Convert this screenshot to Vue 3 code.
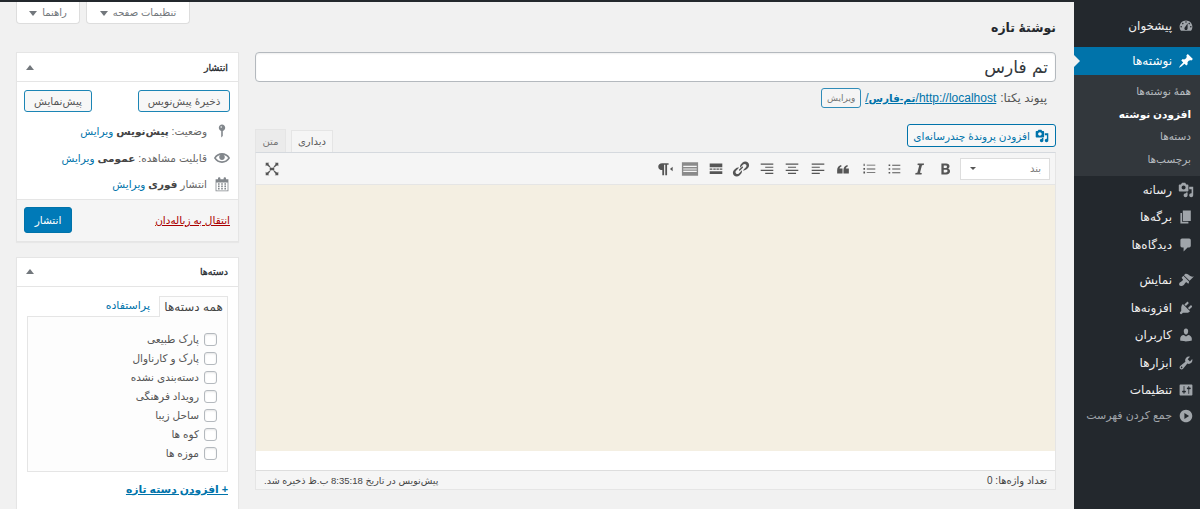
<script setup>
const menuTop = [
  { label: 'پیشخوان', icon: 'M3.76 16h12.48c1.1-1.37 1.76-3.11 1.76-5 0-4.42-3.58-8-8-8s-8 3.58-8 8c0 1.89.66 3.63 1.76 5zM10 4c.55 0 1 .45 1 1s-.45 1-1 1-1-.45-1-1 .45-1 1-1zM6 6c.55 0 1 .45 1 1s-.45 1-1 1-1-.45-1-1 .45-1 1-1zm8 0c.55 0 1 .45 1 1s-.45 1-1 1-1-.45-1-1 .45-1 1-1zm-5.37 5.55L12 7v6c0 1.1-.9 2-2 2s-2-.9-2-2c0-.57.24-1.08.63-1.45zM4 10c.55 0 1 .45 1 1s-.45 1-1 1-1-.45-1-1 .45-1 1-1zm12 0c.55 0 1 .45 1 1s-.45 1-1 1-1-.45-1-1 .45-1 1-1z' }
]
const postIcon = 'M10.44 3.02l1.82-1.82 6.36 6.35-1.83 1.82c-1.05-.68-2.48-.57-3.41.36l-.75.75c-.92.93-1.04 2.35-.35 3.41l-1.83 1.82-2.41-2.41-2.8 2.79c-.42.42-3.38 2.71-3.8 2.29s1.86-3.39 2.28-3.81l2.79-2.79L4.1 9.36l1.83-1.82c1.05.69 2.48.57 3.4-.36l.75-.75c.93-.92 1.05-2.35.36-3.41z'
const mediaIcon = 'M13 11V4c0-.55-.45-1-1-1h-1.67L9 1H5L3.67 3H2c-.55 0-1 .45-1 1v7c0 .55.45 1 1 1h10c.55 0 1-.45 1-1zM7 4.5c1.38 0 2.5 1.12 2.5 2.5S8.38 9.5 7 9.5 4.5 8.38 4.5 7 5.62 4.5 7 4.5zM14 6h5v10.5c0 1.38-1.12 2.5-2.5 2.5S14 17.88 14 16.5s1.12-2.5 2.5-2.5c.17 0 .34.02.5.05V9h-3V6zm-4 8.05V13h2v3.5c0 1.38-1.12 2.5-2.5 2.5S7 17.88 7 16.5 8.12 14 9.5 14c.17 0 .34.02.5.05z'
const group2 = [
  { label: 'رسانه', icon: mediaIcon },
  { label: 'برگه‌ها', icon: 'M6 15V2h10v13H6zm-1 1h8v2H3V5h2v11z' },
  { label: 'دیدگاه‌ها', icon: 'M5 2h9c1.1 0 2 .9 2 2v7c0 1.1-.9 2-2 2h-2l-5 5v-5H5c-1.1 0-2-.9-2-2V4c0-1.1.9-2 2-2z' }
]
const group3 = [
  { label: 'نمایش', icon: 'M14.48 11.06L7.41 3.99l1.5-1.5c.5-.56 2.3-.47 3.51.32 1.21.8 1.43 1.28 2.91 2.1 1.18.64 2.45 1.26 4.45.85zm-.71.71L6.7 4.7 4.93 6.47c-.39.39-.39 1.02 0 1.41l1.06 1.06c.39.39.39 1.03 0 1.42-.6.6-1.43 1.11-2.21 1.69-.35.26-.7.53-1.01.84C1.43 13.23.91 15.95 1.98 17s3.79.54 5.1-.77c.32-.32.59-.67.85-1.02.58-.79 1.09-1.61 1.69-2.21.39-.39 1.02-.39 1.41 0l1.06 1.06c.39.39 1.02.39 1.41 0z' },
  { label: 'افزونه‌ها', icon: 'M13.11 4.36L9.87 7.6 8 5.73l3.24-3.24c.35-.34 1.05-.2 1.56.32.52.51.66 1.21.31 1.55zm-8 1.77l.91-1.12 9.01 9.01-1.19.84c-.71.71-2.63 1.16-3.82 1.16H6.14L4.9 17.26c-.59.59-1.54.59-2.12 0-.59-.58-.59-1.53 0-2.12l1.24-1.24v-3.88c0-1.13.4-3.19 1.09-3.89zm7.26 3.97l3.24-3.24c.34-.35 1.04-.21 1.55.31.52.51.66 1.21.31 1.55l-3.24 3.25z' },
  { label: 'کاربران', icon: 'M10 9.25c-2.27 0-2.73-3.44-2.73-3.44C7 4.02 7.82 2 9.97 2c2.16 0 2.98 2.02 2.71 3.81 0 0-.41 3.44-2.68 3.44zm0 2.57L12.72 10c2.39 0 4.52 2.33 4.52 4.53v2.49s-3.65 1.13-7.24 1.13c-3.65 0-7.24-1.13-7.24-1.13v-2.49c0-2.25 1.94-4.48 4.47-4.48z' },
  { label: 'ابزارها', icon: 'M16.68 9.77c-1.34 1.34-3.3 1.67-4.95.99l-5.41 6.52c-.99.99-2.59.99-3.58 0s-.99-2.59 0-3.57l6.52-5.42c-.68-1.65-.35-3.61.99-4.95 1.28-1.28 3.12-1.62 4.72-1.06l-2.89 2.89 2.82 2.82 2.86-2.87c.53 1.58.18 3.39-1.08 4.65zM3.81 16.21c.4.39 1.04.39 1.43 0 .4-.4.4-1.04 0-1.43-.39-.4-1.03-.4-1.43 0-.39.39-.39 1.03 0 1.43z' },
  { label: 'تنظیمات', icon: 'M18 16V4c0-.55-.45-1-1-1H3c-.55 0-1 .45-1 1v12c0 .55.45 1 1 1h14c.55 0 1-.45 1-1zM8 11h1c.55 0 1 .45 1 1s-.45 1-1 1H8v1.5c0 .28-.22.5-.5.5s-.5-.22-.5-.5V13H6c-.55 0-1-.45-1-1s.45-1 1-1h1V5.5c0-.28.22-.5.5-.5s.5.22.5.5V11zm5-2h-1c-.55 0-1-.45-1-1s.45-1 1-1h1V5.5c0-.28.22-.5.5-.5s.5.22.5.5V7h1c.55 0 1 .45 1 1s-.45 1-1 1h-1v5.5c0 .28-.22.5-.5.5s-.5-.22-.5-.5V9z' }
]
const submenu = ['همهٔ نوشته‌ها', 'افزودن نوشته', 'دسته‌ها', 'برچسب‌ها']
const collapseIcon = 'M10 2.16c4.33 0 7.84 3.51 7.84 7.84s-3.51 7.84-7.84 7.84S2.16 14.33 2.16 10 5.71 2.16 10 2.16zm2 11.72V6.12L6.18 9.97z'
const categories = ['پارک طبیعی', 'پارک و کارناوال', 'دسته‌بندی نشده', 'رویداد فرهنگی', 'ساحل زیبا', 'کوه ها', 'موزه ها']
const toolbar = [
  { name: 'bold', d: 'M6 4h5.2c2.4 0 3.8 1.1 3.8 3 0 1.2-.7 2.1-1.8 2.5 1.5.3 2.4 1.4 2.4 2.9 0 2.2-1.6 3.6-4.2 3.6H6zm2.6 2.1v2.7h2c1 0 1.6-.5 1.6-1.4s-.6-1.3-1.6-1.3zm0 4.7v3.1h2.3c1.2 0 1.9-.6 1.9-1.6s-.7-1.5-1.9-1.5z' },
  { name: 'italic', d: 'M7.5 4h7l-.3 1.5-2 .4L10 14.1l2 .4-.3 1.5h-7l.3-1.5 2-.4 2.2-8.2-2-.4z' },
  { name: 'ul', d: 'M4 5h1.8v1.8H4zm4 .4h9v1H8zM4 9.100h1.800v1.800H4zm4 .4h9v1H8zM4 13.200h1.800V15H4zm4 .4h9v1H8z' },
  { name: 'ol', d: 'M4 4.300h1.200v2.400H4zm3.500.9h9.500v1H7.500zM3.800 9h1.800v1.800H3.800zm3.700.5h9.500v1H7.500zm-3.700 3.200h1.800v2.400H3.800zm3.700.6h9.500v1H7.500z' },
  { name: 'quote', tf: 'rotate(180 10 10)', d: 'M9.500 5v3.800c0 3-1.800 5-4.300 5.700l-.7-1.400c1.300-.5 2.200-1.400 2.400-2.600H3.500V5zm7 0v3.800c0 3-1.800 5-4.300 5.700l-.7-1.400c1.300-.5 2.200-1.400 2.400-2.600h-3.400V5z' },
  { name: 'left', d: 'M3 4h14v1.300H3zm0 3.400h9v1.300H3zm0 3.400h14v1.300H3zm0 3.400h9v1.300H3z' },
  { name: 'center', d: 'M3 4h14v1.300H3zm2.500 3.400h9v1.300h-9zM3 10.800h14v1.300H3zm2.500 3.400h9v1.300h-9z' },
  { name: 'right', d: 'M3 4h14v1.300H3zm5 3.400h9v1.300H8zm-5 3.400h14v1.300H3zm5 3.400h9v1.300H8z' },
  { name: 'link', d: 'M17.740 2.760c1.680 1.690 1.680 4.410 0 6.100l-1.530 1.520c-1.120 1.130-2.700 1.510-4.130 1.170l2.270-2.270 1.140-1.140c.84-.84.840-2.210 0-3.050s-2.210-.84-3.050 0l-1.140 1.140-2.270 2.270c-.340-1.430.040-3.010 1.170-4.130l1.520-1.530c1.690-1.680 4.410-1.680 6.020-.08zM7.920 11.580c.31.310.78.310 1.080 0l3.050-3.050c.31-.3.310-.77 0-1.080s-.77-.31-1.080 0L7.920 10.500c-.31.310-.31.780 0 1.080zM2.260 17.240c-1.680-1.690-1.680-4.410 0-6.100l1.530-1.520c1.120-1.130 2.700-1.510 4.130-1.170L5.650 10.720 4.510 11.860c-.84.840-.84 2.210 0 3.050s2.210.84 3.050 0l1.140-1.140 2.270-2.270c.34 1.430-.04 3.010-1.170 4.130l-1.520 1.530c-1.690 1.680-4.410 1.680-6.020.08z' },
  { name: 'more', d: 'M3 4h14v4H3zm0 5.500h3v1.400H3zm4 0h2.700v1.400H7zm3.500 0h2.700v1.400h-2.700zm3.500 0h3v1.400h-3zM3 12.500h14v3H3z' },
  { name: 'kitchen', fade: true, d: 'M1 2.500h18v15H1zm1.500 4h15v1.300h-15zm0 3h15v1h-15zm0 2.500h15v1.200h-15z' },
  { name: 'para', d: 'M3 3.500h11v1.900h-1.700V17h-2V5.400H9V17H7v-5.800C4.500 11.200 2.500 9.700 2.500 7.400 2.500 5.100 4.300 3.500 6.800 3.500zM18.500 7.500v5L15.500 10z' }
]
</script>

<template>
  <div class="page">
    <div class="adminbar"></div>
    <div class="layout">
      <nav class="menu">
        <ul class="menu-list first">
          <li v-for="item in menuTop" :key="item.label" class="menu-item">
            <svg class="menu-icon" viewBox="0 0 20 20"><path :d="item.icon" /></svg>
            <span>{{ item.label }}</span>
          </li>
        </ul>
        <div class="active-item">
          <svg class="menu-icon" viewBox="0 0 20 20"><path :d="postIcon" /></svg>
          <span>نوشته‌ها</span>
          <i class="active-arrow"></i>
        </div>
        <ul class="submenu">
          <li v-for="(s, i) in submenu" :key="s" :class="{ current: i === 1 }">{{ s }}</li>
        </ul>
        <ul class="menu-list second">
          <li v-for="item in group2" :key="item.label" class="menu-item">
            <svg class="menu-icon" viewBox="0 0 20 20"><path :d="item.icon" /></svg>
            <span>{{ item.label }}</span>
          </li>
        </ul>
        <ul class="menu-list third">
          <li v-for="item in group3" :key="item.label" class="menu-item">
            <svg class="menu-icon" viewBox="0 0 20 20"><path :d="item.icon" /></svg>
            <span>{{ item.label }}</span>
          </li>
        </ul>
        <div class="collapse">
          <svg class="menu-icon" viewBox="0 0 20 20"><path :d="collapseIcon" transform="matrix(-1 0 0 1 20 0)" /></svg>
          <span>جمع کردن فهرست</span>
        </div>
      </nav>

      <main class="content">
        <section class="primary">
          <h1 class="title">نوشتهٔ تازه</h1>
          <input class="title-input" type="text" value="تم فارس" />
          <div class="permalink">
            <span class="perma-label">پیوند یکتا:</span>
            <a class="perma-link">http://localhost/<b>تم-فارس</b>/</a>
            <button class="mini-btn">ویرایش</button>
          </div>
          <div class="editor-tools">
            <button class="media-btn">
              <svg viewBox="0 0 20 20"><path :d="mediaIcon" /></svg>
              <span>افزودن پروندهٔ چندرسانه‌ای</span>
            </button>
            <div class="tabs">
              <span class="tab tab-on">دیداری</span>
              <span class="tab tab-off">متن</span>
            </div>
          </div>
          <div class="editor">
            <div class="toolbar">
              <div class="format-select"><span>بند</span><i></i></div>
              <svg v-for="t in toolbar" :key="t.name" class="tool" :class="{ fade: t.fade }" viewBox="0 0 20 20"><path fill-rule="evenodd" :d="t.d" :transform="t.tf" /></svg>
              <svg class="tool full" viewBox="0 0 20 20"><path d="M3 3h4L5.800 4.200 8.500 8l-.5.500L4.200 5.800 3 7zm14 0v4l-1.200-1.200L12 8.500l-.5-.5 2.700-3.800L13 3zM3 17v-4l1.200 1.200L8 11.500l.5.500-2.700 3.800L7 17zm14 0h-4l1.200-1.200L11.500 12l.5-.5 3.800 2.700L17 13zM7.500 8.500h5v3h-5z" /></svg>
            </div>
            <div class="canvas"></div>
            <div class="canvas-foot"></div>
            <div class="status">
              <span class="count">تعداد واژه‌ها: 0</span>
              <span>پیش‌نویس در تاریخ 8:35:18 ب.ظ ذخیره شد.</span>
            </div>
          </div>
        </section>

        <aside class="side">
          <div class="screen-tabs">
            <button class="screen-btn wide">تنظیمات صفحه<i></i></button>
            <button class="screen-btn">راهنما<i></i></button>
          </div>

          <div class="box">
            <div class="box-head"><b>انتشار</b><i></i></div>
            <div class="pub-actions">
              <button class="blue-outline draft">ذخیرهٔ پیش‌نویس</button>
              <button class="blue-outline preview">پیش‌نمایش</button>
            </div>
            <div class="pub-row">
              <svg viewBox="0 0 20 20"><path d="M14 6c0 1.860-1.280 3.410-3 3.860V16c0 1-2 2-2 2V9.860c-1.720-.45-3-2-3-3.860 0-2.210 1.790-4 4-4s4 1.790 4 4zM8 5c0 .55.45 1 1 1s1-.45 1-1-.45-1-1-1-1 .45-1 1z" /></svg>
              <span>وضعیت: <b>پیش‌نویس</b> <a>ویرایش</a></span>
            </div>
            <div class="pub-row">
              <svg viewBox="0 0 20 20"><path d="M19.700 9.400C17.700 6 14 3.900 10 3.900S2.300 6 .3 9.400L0 10l.3.6c2 3.400 5.700 5.500 9.700 5.500s7.700-2.100 9.700-5.500l.3-.6-.3-.6zM10 14.100c-3.100 0-6-1.600-7.700-4.100C3.600 8 5.700 6.600 8 6.100c-.9.6-1.500 1.700-1.500 2.900 0 1.900 1.600 3.500 3.500 3.500s3.500-1.600 3.500-3.500c0-1.200-.6-2.300-1.500-2.900 2.300.5 4.400 1.900 5.700 3.900-1.700 2.500-4.600 4.100-7.700 4.100z" /></svg>
              <span>قابلیت مشاهده: <b>عمومی</b> <a>ویرایش</a></span>
            </div>
            <div class="pub-row">
              <svg viewBox="0 0 20 20"><path d="M15 4h3v15H2V4h3V3c0-.41.15-.76.44-1.060.29-.29.65-.44 1.060-.44s.77.15 1.060.44c.29.3.44.65.44 1.060v1h4V3c0-.41.15-.76.44-1.060.29-.29.65-.44 1.060-.44s.77.15 1.060.44c.29.3.44.65.44 1.060v1zM17 18V8H3v10h14zM7 9v2H5V9h2zm2 0h2v2H9V9zm4 2V9h2v2h-2zm-6 1v2H5v-2h2zm2 0h2v2H9v-2zm4 2v-2h2v2h-2zm-6 1v2H5v-2h2zm4 2H9v-2h2v2zm4 0h-2v-2h2v2z" /></svg>
              <span>انتشار <b>فوری</b> <a>ویرایش</a></span>
            </div>
            <div class="pub-foot">
              <a class="trash">انتقال به زباله‌دان</a>
              <button class="publish">انتشار</button>
            </div>
          </div>

          <div class="box cats">
            <div class="box-head"><b>دسته‌ها</b><i></i></div>
            <div class="cats-body">
              <div class="cat-tabs">
                <span class="cat-tab on">همه دسته‌ها</span>
                <a class="cat-tab">پراستفاده</a>
              </div>
              <div class="cat-panel">
                <label v-for="c in categories" :key="c" class="cat-row">
                  <input type="checkbox" />
                  <span>{{ c }}</span>
                </label>
              </div>
              <a class="add-cat">+ افزودن دسته تازه</a>
            </div>
          </div>
        </aside>
      </main>
    </div>
  </div>
</template>

<style>
html, body { margin: 0; padding: 0; background: #f1f1f1; overflow: hidden; }
</style>

<style scoped>
* { box-sizing: border-box; }
ul { list-style: none; margin: 0; padding: 0; }
button { font-family: inherit; cursor: pointer; margin: 0; padding: 0; }
a { color: #0073aa; }
.page {
  height: 509px;
  overflow: hidden;
  direction: rtl;
  background: #f1f1f1;
  color: #444;
  font-family: "Liberation Sans", "DejaVu Sans", sans-serif;
  font-size: 11px;
}
.adminbar { height: 2px; background: #23282d; }
.layout { display: flex; height: 507px; }

.menu { width: 126px; flex: none; background: #23282d; color: #eee; font-size: 12px; padding-top: 10px; }
.menu-item, .active-item, .collapse { display: flex; align-items: center; height: 27.500px; padding-right: 6px; gap: 6px; }
.menu-icon { width: 16px; height: 16px; flex: none; fill: #a0a5aa; }
.first { margin-bottom: 8px; height: 27px; }
.active-item { height: 28px; background: #0073aa; color: #fff; position: relative; }
.active-item .menu-icon { fill: #fff; }
.active-arrow { position: absolute; left: 0; top: 8px; border: 6px solid transparent; border-left-color: #f1f1f1; border-right-width: 0; }
.submenu { background: #32373c; height: 101px; padding-top: 5px; color: #b4b9be; }
.submenu li { height: 22.700px; line-height: 22px; padding-right: 9px; font-size: 10.500px; }
.submenu .current { color: #fff; font-weight: 700; }
.second { margin-bottom: 8px; }
.collapse { color: #a0a5aa; height: 23px; font-size: 11px; }

.content { flex: 1; display: grid; grid-template-columns: 801px 223px; gap: 16px; padding: 0 18px 0 16px; align-items: start; }
.primary { min-width: 0; }
.title { margin: 14px 0 12px; font-size: 12.500px; line-height: 24px; font-weight: 700; color: #23282d; }
.title-input {
  display: block; width: 100%; height: 30px; padding: 0 7px;
  border: 1px solid #b4b9be; border-radius: 4px; background: #fff;
  font: 17px "DejaVu Sans", sans-serif; color: #32373c; outline: none;
  direction: rtl; box-shadow: inset 0 1px 2px rgba(0,0,0,.07);
}
.permalink { display: flex; align-items: center; height: 20px; margin-top: 6px; padding-right: 9px; gap: 4px; font-size: 12px; color: #555; }
.perma-link { text-decoration: underline; font-size: 12px; }
.perma-link b { font-size: 10.500px; }
.mini-btn { width: 40px; height: 20px; border: 1px solid #0073aa; border-radius: 3px; background: #f7f7f7; color: #555; font-size: 9px; opacity: .8; }

.editor-tools { display: flex; justify-content: space-between; align-items: flex-end; height: 28px; margin-top: 16px; }
.media-btn {
  align-self: flex-start; display: flex; align-items: center; gap: 5px; width: 149px; height: 23px; padding: 0 6px 0 0;
  border: 1px solid #0073aa; border-radius: 3px; background: #f7f7f7; color: #0073aa; font-size: 10.500px;
}
.media-btn svg { width: 14px; height: 14px; fill: #0073aa; flex: none; }
.tabs { display: flex; gap: 5px; }
.tab { display: flex; align-items: center; justify-content: center; border: 1px solid #e5e5e5; border-bottom: 0; font-size: 10px; color: #555; height: 22px; }
.tab-on { width: 42px; background: #f5f5f5; position: relative; top: 1px; }
.tab-off { width: 31px; height: 23px; background: #ebebeb; color: #777; }

.editor { border: 1px solid #e5e5e5; background: #fff; border-top-color: #d5d9de; }
.toolbar { position: relative; display: flex; align-items: center; height: 32px; padding-right: 5px; background: #f5f5f5; border-bottom: 1px solid #e5e5e5; }
.format-select { display: flex; justify-content: space-between; align-items: center; width: 90px; height: 22px; margin-left: 2px; padding: 0 8px 0 9px; background: #fff; border: 1px solid #ddd; font-size: 10px; color: #777; }
.format-select i { border: 3px solid transparent; border-top: 3px solid #555; border-bottom: 0; }
.tool { width: 18px; height: 18px; margin: 0 3.750px; fill: #555; flex: none; }
.tool.fade { fill: #8a8a8a; }
.full { position: absolute; left: 7px; top: 7px; margin: 0; }
.canvas { height: 266px; background: #f4efe2; }
.canvas-foot { height: 19px; background: #fff; }
.status { display: flex; justify-content: space-between; align-items: center; height: 19px; padding: 0 8px; background: #f5f5f5; border-top: 1px solid #ddd; font-size: 9.500px; color: #444; }
.count { font-size: 10px; }

.side { min-width: 0; }
.screen-tabs { display: flex; justify-content: flex-end; gap: 6px; height: 22px; margin-bottom: 28px; }
.screen-btn { display: flex; align-items: center; justify-content: center; gap: 5px; width: 64px; height: 22px; background: #fff; border: 1px solid #ddd; border-top: 0; border-radius: 0 0 4px 4px; color: #72777c; font-size: 10px; }
.screen-btn.wide { width: 104px; }
.screen-btn i { border: 4px solid transparent; border-top: 5px solid #72777c; border-bottom: 0; margin-top: 1px; }

.box { background: #fff; border: 1px solid #e5e5e5; box-shadow: 0 1px 1px rgba(0,0,0,.04); }
.box-head { display: flex; justify-content: space-between; align-items: center; height: 29px; padding: 0 10px 0 8px; border-bottom: 1px solid #e5e5e5; font-size: 9.500px; color: #23282d; }
.box-head b { font-weight: 400; -webkit-text-stroke: .3px currentColor; }
.box-head i { border: 4px solid transparent; border-bottom: 5px solid #72777c; border-top: 0; margin-left: 1px; }

.pub-actions { display: flex; justify-content: space-between; padding: 8px 8px 0 7px; }
.blue-outline { height: 22px; border: 1px solid #1c85b5; border-radius: 3px; background: #f7f7f7; color: #555; font-size: 10.500px; }
.draft { width: 92px; }
.preview { width: 68px; }
.pub-row { display: flex; align-items: center; gap: 7px; height: 26.500px; padding-right: 8px; font-size: 10.500px; color: #666; }
.pub-row:nth-of-type(3) { margin-top: 6px; }
.pub-row svg { width: 16px; height: 16px; fill: #82878c; flex: none; }
.pub-row b { color: #444; }
.pub-foot { display: flex; justify-content: space-between; align-items: center; height: 42px; margin-top: 1px; padding: 0 8px 1px 7px; background: #f5f5f5; border-top: 1px solid #e5e5e5; }
.trash { color: #a00; text-decoration: underline; font-size: 10.500px; }
.publish { width: 48px; height: 26px; background: #007ab8; border: 1px solid #0073aa; border-radius: 3px; color: #fff; font-size: 10.500px; }

.cats { margin-top: 15px; height: 300px; }
.cats-body { padding: 8px 10px; }
.cat-tabs { display: flex; height: 21px; }
.cat-tab { display: flex; align-items: center; padding: 0 9px; font-size: 11px; height: 21px; }
.cat-tab.on { width: 69px; background: #fdfdfd; border: 1px solid #e5e5e5; border-bottom: 0; color: #444; justify-content: center; padding: 0; position: relative; top: 1px; z-index: 1; font-size: 12px; }
.cat-panel { height: 156px; padding: 13px 10px 0; background: #fdfdfd; border: 1px solid #e5e5e5; }
.cat-row { display: flex; align-items: center; gap: 5px; height: 19px; font-size: 10.500px; color: #555; }
.cat-row input {
  appearance: none; width: 13px; height: 13px; margin: 0; background: #fff;
  border: 1px solid #b4b9be; border-radius: 3px; box-shadow: inset 0 1px 2px rgba(0,0,0,.1); flex: none;
}
.add-cat { display: block; margin-top: 11px; font-weight: 700; font-size: 10.800px; text-decoration: underline; }
</style>
